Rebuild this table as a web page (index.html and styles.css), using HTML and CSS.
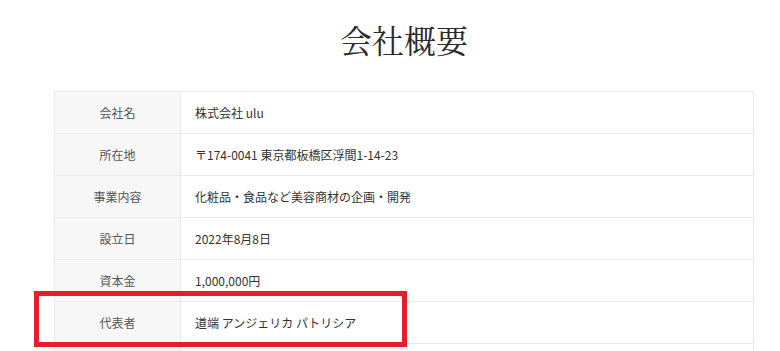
FILE: index.html
```html
<!DOCTYPE html>
<html lang="ja">
<head>
<meta charset="utf-8">
<link rel="stylesheet" href="styles.css">
</head>
<body>
<main class="page">
  <h1 class="title">会社概要</h1>
  <div class="table-wrap">
    <table class="company">
      <tr><th>会社名</th><td>株式会社 ulu</td></tr>
      <tr><th>所在地</th><td>〒174-0041 東京都板橋区浮間1-14-23</td></tr>
      <tr><th>事業内容</th><td>化粧品・食品など美容商材の企画・開発</td></tr>
      <tr><th>設立日</th><td>2022年8月8日</td></tr>
      <tr><th>資本金</th><td>1,000,000円</td></tr>
      <tr><th>代表者</th><td>道端 アンジェリカ パトリシア</td></tr>
      <tr><th>&nbsp;</th><td>&nbsp;</td></tr>
    </table>
    <div class="highlight"></div>
  </div>
</main>
</body>
</html>
```
FILE: styles.css
```css
html, body {
  margin: 0;
  padding: 0;
  background: #fff;
}
.page {
  width: 700px;
  margin-left: 54px;
}
.title {
  margin: 0;
  height: 91px;
  box-sizing: border-box;
  padding-top: 16px;
  text-align: center;
  font-family: "Noto Serif CJK JP", "Liberation Serif", serif;
  font-weight: 400;
  font-size: 32px;
  line-height: 46px;
  color: #2a2a2a;
}
.table-wrap {
  position: relative;
}
.company {
  width: 700px;
  border-collapse: collapse;
  border: 1px solid #ebebeb;
  font-family: "Noto Sans CJK JP", sans-serif;
  font-size: 12px;
}
.company th,
.company td {
  height: 42px;
  padding: 0 14px;
  border-bottom: 1px solid #ebebeb;
  vertical-align: middle;
  box-sizing: border-box;
}
.company th {
  width: 126px;
  background: #f7f7f7;
  border-right: 1px solid #ebebeb;
  font-weight: 400;
  color: #555;
  text-align: center;
}
.company td {
  color: #333;
  text-align: left;
}
.highlight {
  position: absolute;
  left: -20px;
  top: 200px;
  width: 373px;
  height: 56px;
  box-sizing: border-box;
  border: 5px solid #e61e2a;
}
```
